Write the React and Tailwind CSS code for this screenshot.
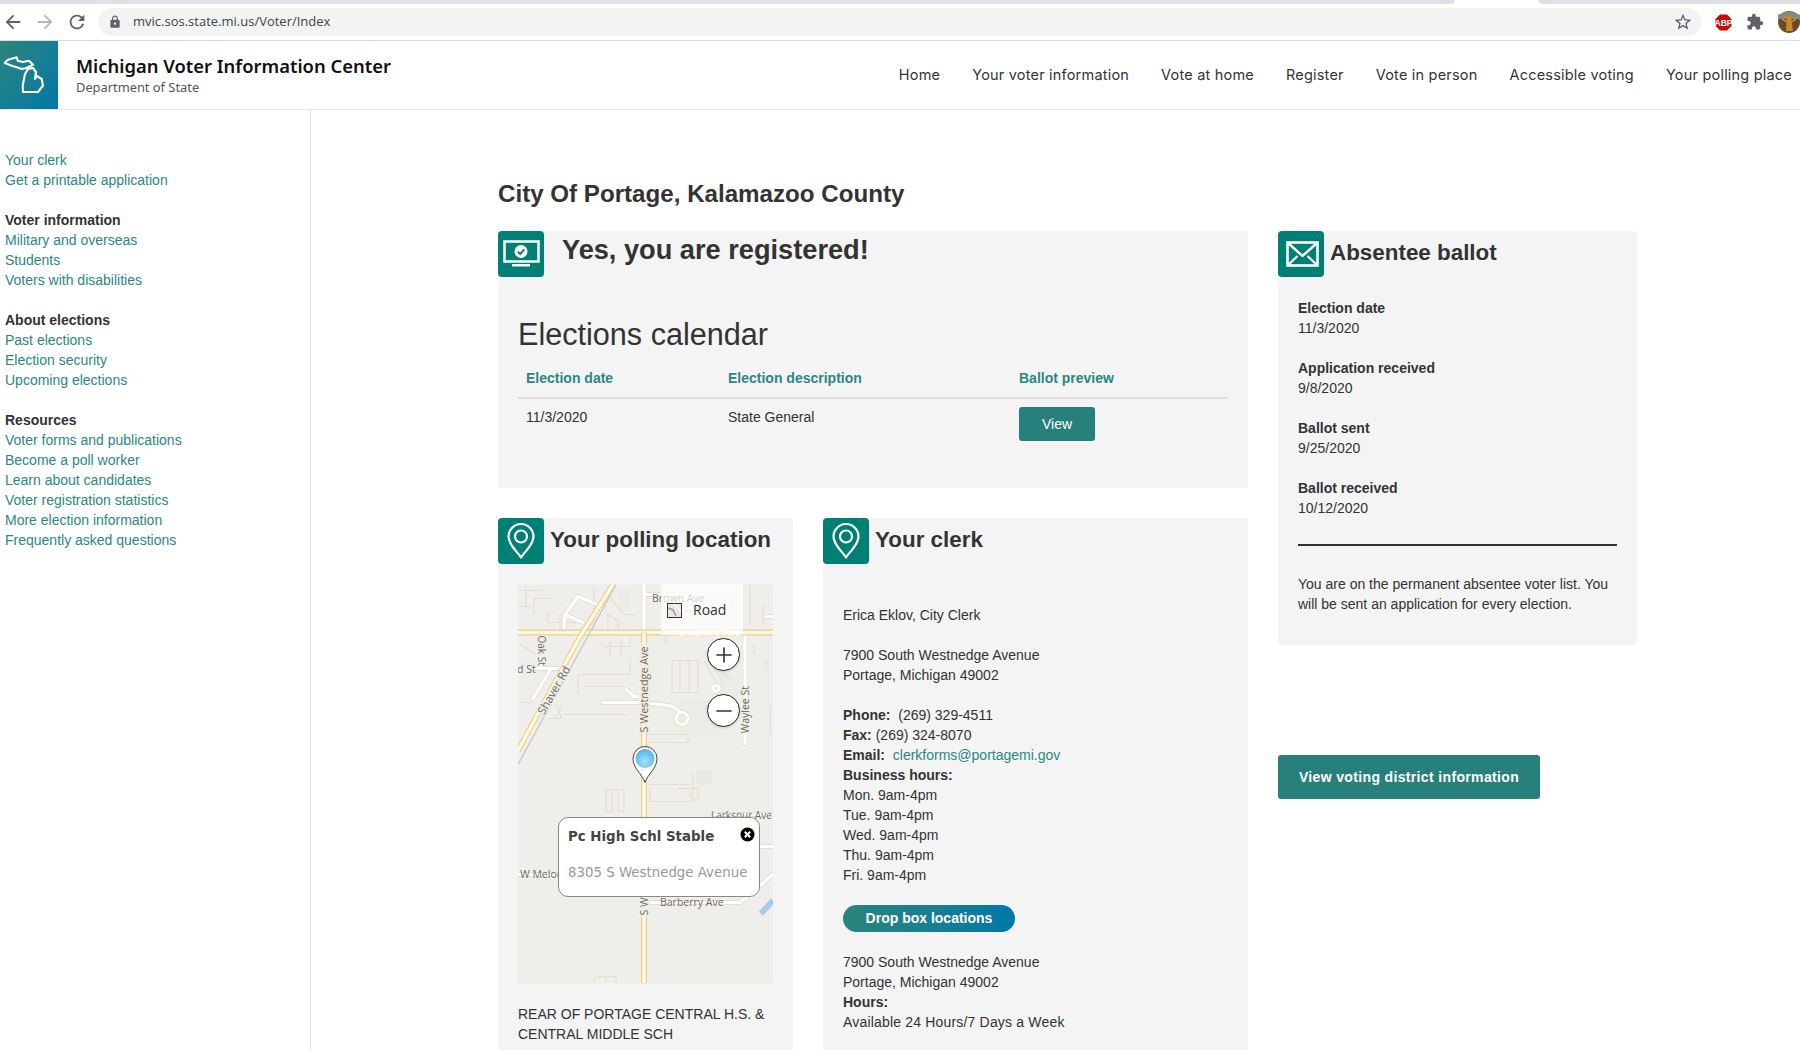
import React from "react";
import { MdArrowBack, MdArrowForward, MdRefresh, MdLock, MdStarBorder, MdExtension } from "react-icons/md";
import { Plus, Minus } from "lucide-react";

const ARIAL = "font-['Liberation_Sans',Arial,sans-serif]";

function Link({ children, className = "" }) {
  return <div className={"text-[#2a8884] " + className}>{children}</div>;
}

function SideGroup({ title, items }) {
  return (
    <div className="mb-5">
      {title && <div className="font-bold text-[#333]">{title}</div>}
      {items.map((t) => (
        <Link key={t}>{t}</Link>
      ))}
    </div>
  );
}

function IconBox({ children }) {
  return (
    <div className="w-[46px] h-[46px] shrink-0 rounded-[4px] bg-[#008075] flex items-center justify-center">
      <svg width="46" height="46" viewBox="0 0 46 46" fill="none">{children}</svg>
    </div>
  );
}

function PinIcon() {
  return (
    <IconBox>
      <path d="M23 39.5 C19 33 10.5 27 10.5 18.5 A12.5 12.5 0 0 1 35.5 18.5 C35.5 27 27 33 23 39.5 Z" stroke="#fff" strokeWidth="2.2" strokeLinejoin="round" />
      <circle cx="23" cy="18.5" r="6" stroke="#fff" strokeWidth="2.2" />
    </IconBox>
  );
}

function MonitorIcon() {
  return (
    <IconBox>
      <rect x="6.5" y="10.5" width="34" height="20" stroke="#fff" strokeWidth="2.5" />
      <rect x="14" y="33" width="18" height="2.5" fill="#fff" />
      <circle cx="23" cy="20.5" r="6.5" fill="#fff" />
      <path d="M19.8 20.6 L22.2 23 L26.3 18.4" stroke="#008075" strokeWidth="1.9" />
    </IconBox>
  );
}

function EnvelopeIcon() {
  return (
    <IconBox>
      <rect x="9.5" y="11.5" width="30" height="23" stroke="#fff" strokeWidth="2.6" />
      <path d="M10 12 L24.5 25 L39 12" stroke="#fff" strokeWidth="2.4" />
      <path d="M10 34 L19.5 25 M39 34 L29.5 25" stroke="#fff" strokeWidth="2.2" />
    </IconBox>
  );
}

function MapDrawing() {
  const beige = "#e4decf";
  const label = { fontFamily: "'Open Sans',sans-serif", fontSize: 10.5, fill: "#6d6a64" };
  const local = (
    <>
      <path d="M126 48 V0 M126 10 H142" />
      <path d="M46 44 L47 30 L60 12 L84 22 L68 44 M47 30 L65 38" />
      <path d="M15 84 H44 M32 86 L15 114 M22 72 V84" />
      <path d="M85 118 H126 L150 121 Q158 122 162 128 M108 105 L116 112 H124" />
      <circle cx="164" cy="134" r="6" />
      <circle cx="198" cy="104" r="3" />
      <path d="M227 48 V159" />
      <path d="M0 290 H70 M128 318 H222 L255 290 M196 230 H255 M220 262 H255 M248 32 H255" />
    </>
  );
  return (
    <svg className="w-full h-full block" viewBox="0 0 255 399">
      <defs>
        <radialGradient id="pinb" cx="50%" cy="65%" r="60%">
          <stop offset="0%" stopColor="#a5e2fb" />
          <stop offset="100%" stopColor="#55b5ea" />
        </radialGradient>
      </defs>
      <rect width="255" height="399" fill="#efeeea" />
      <rect x="160" y="116" width="40" height="37" fill="#ecebe5" />
      <rect x="202" y="90" width="20" height="23" fill="#ecebe5" />
      <rect x="100" y="5" width="12" height="22" fill="#ecebe5" />
      <rect x="178" y="186" width="16" height="14" fill="#e9e7e1" />
      {/* parcels */}
      <g stroke={beige} strokeWidth="1.1" fill="none">
        <path d="M8 0 V25 M0 6 H24 M16 14 H34 M16 14 V30 M0 22 H14 M30 27 V38 H60 M42 30 V44 M76 2 V44 M88 8 L106 30 H118 M90 44 V30 L100 36 V44 M85 62 H112 V44 M103 52 V74 M92 56 V72 M60 90 H112 V74 M60 90 V110 M66 102 H106" />
        <path d="M38 120 L44 134 H30 L44 134 M38 134 L44 120 M46 130 H110 M2 118 H14 M2 60 L18 70" />
        <path d="M154 76 H180 V108 H154 Z M162 76 V108 M171 76 V108 M186 76 L200 102 M192 76 L206 100 M197 76 L212 96 M148 26 V60 M148 26 H175 M160 45 H200 M130 150 H170 V158 H130 M132 203 V217 H175 V188 M88 205 H106 M88 205 V227 H94 V205 M100 205 V227 H106 V205 M130 200 H172 M160 204 H180 V214 H172 V204" />
        <path d="M0 290 V399 M76 399 V395 Q76 392 82 392 H98 V399 M88 392 V399 M214 10 V28 M232 0 V40 M245 20 V40 M236 60 V70 M248 75 V85 M252 120 V150" />
      </g>
      {/* white local roads */}
      <g fill="none" strokeLinecap="round" strokeLinejoin="round">
        <g stroke={beige} strokeWidth="4.8">{local}</g>
        <g stroke="#ffffff" strokeWidth="3.2">{local}</g>
      </g>
      {/* Main roads */}
      <path d="M0 48 H255" stroke="#efcb7c" strokeWidth="6" />
      <path d="M0 48 H255" stroke="#fef9e6" strokeWidth="3.6" />
      <path d="M126 48 V399" stroke="#efcb7c" strokeWidth="6" />
      <path d="M126 48 V399" stroke="#fef9e6" strokeWidth="3.6" />
      <path d="M95 0 L62 52 L0 166" stroke="#efcb7c" strokeWidth="5.4" fill="none" />
      <path d="M95 0 L62 52 L0 166" stroke="#fef9e6" strokeWidth="3.4" fill="none" />
      <path d="M98 0 L0 180" stroke="#c4c2c6" strokeWidth="1.2" fill="none" />
      <path d="M243 329 L255 316" stroke="#a9c9f0" strokeWidth="6" />
      {/* Labels */}
      <text x="134" y="17" style={label}>Brown Ave</text>
      <text x="161" y="51" style={{ ...label, fill: "#ffffff", opacity: 0.8 }}>E Centre Ave</text>
      <text style={{ ...label, fontSize: 10, paintOrder: "stroke", stroke: "#efeeea", strokeWidth: 2 }} transform="translate(20,51) rotate(90)">Oak St</text>
      <text x="-1" y="88" style={label}>d St</text>
      <text style={{ ...label, fontSize: 11.5, paintOrder: "stroke", stroke: "#efeeea", strokeWidth: 2.5 }} transform="translate(26,131) rotate(-60)">Shaver Rd</text>
      <rect x="120" y="58" width="12" height="90" fill="#efeeea" opacity="0.7" />
      <text style={{ ...label, fontSize: 10.8 }} transform="translate(130,148) rotate(-90)">S Westnedge Ave</text>
      <text style={{ ...label, paintOrder: "stroke", stroke: "#efeeea", strokeWidth: 2 }} transform="translate(231,149) rotate(-90)">Waylee St</text>
      <text x="193" y="234" style={{ ...label, fontSize: 10 }}>Larkspur Ave</text>
      <text x="2" y="293" style={label}>W Meloc</text>
      <text x="142" y="321" style={label}>Barberry Ave</text>
      <rect x="120" y="310" width="12" height="22" fill="#efeeea" />
      <text style={label} transform="translate(130,331) rotate(-90)">S W</text>
      {/* Pin */}
      <path d="M127 198 C124 189 115 184 115 174 A12 12 0 0 1 139 174 C139 184 130 189 127 198 Z" fill="#fff" stroke="#444" strokeWidth="1" />
      <circle cx="127" cy="174" r="9.5" fill="url(#pinb)" />
    </svg>
  );
}

function MapBlock() {
  return (
    <div className="relative w-[255px] h-[400px]">
      <MapDrawing />
      <div className="absolute left-[143px] top-0 w-[82px] h-[51px] bg-white/70 flex items-start font-['Open_Sans',sans-serif] text-[14px] text-[#333]">
        <svg className="ml-[6px] mt-[19px] shrink-0" width="15" height="15" viewBox="0 0 15 15">
          <rect x="0.5" y="0.5" width="14" height="14" fill="#ece8dc" stroke="#333" />
          <path d="M1 5 L6 7 L9 13" stroke="#b58bd0" strokeWidth="1.6" fill="none" />
          <path d="M7 1 L14 8" stroke="#fff" strokeWidth="1.2" />
        </svg>
        <span className="ml-[11px] mt-[16px] leading-[20px]">Road</span>
      </div>
      <div className="absolute left-[189px] top-[54px] w-[33px] h-[33px] rounded-full bg-white border-[1.5px] border-[#222] flex items-center justify-center shadow-sm">
        <Plus size={24} strokeWidth={1.6} color="#333" />
      </div>
      <div className="absolute left-[189px] top-[110px] w-[33px] h-[33px] rounded-full bg-white border-[1.5px] border-[#222] flex items-center justify-center shadow-sm">
        <Minus size={24} strokeWidth={1.6} color="#333" />
      </div>
      <div className="absolute left-[40px] top-[233px] w-[202px] h-[80px] bg-white border border-[#888] rounded-[10px] font-['DejaVu_Sans',sans-serif] text-[13.35px]">
        <div className="absolute left-[9px] top-[9px] leading-[20px] font-bold text-[#444] whitespace-nowrap">Pc High Schl Stable</div>
        <div className="absolute left-[9px] top-[45px] leading-[20px] text-[#999] whitespace-nowrap">8305 S Westnedge Avenue</div>
        <svg className="absolute left-[181px] top-[9px]" width="15" height="15" viewBox="0 0 15 15">
          <circle cx="7.5" cy="7.5" r="7" fill="#000" />
          <path d="M4.8 4.8 L10.2 10.2 M10.2 4.8 L4.8 10.2" stroke="#fff" strokeWidth="2" />
        </svg>
      </div>
    </div>
  );
}

function AbsItem({ label, value }) {
  return (
    <div className="mb-5">
      <div className="font-bold">{label}</div>
      <div>{value}</div>
    </div>
  );
}

const NAV = ["Home", "Your voter information", "Vote at home", "Register", "Vote in person", "Accessible voting", "Your polling place"];

export default function App() {
  return (
    <div className={"w-[1800px] h-[1050px] overflow-hidden bg-white flex flex-col " + ARIAL}>
      {/* Browser chrome */}
      <div className="flex h-[4px] shrink-0">
        <div className="w-[1455px] bg-[#dee1e6] rounded-br-[6px]" />
        <div className="w-[84px] bg-white" />
        <div className="flex-1 bg-[#dee1e6] rounded-bl-[6px]" />
      </div>
      <div className="h-[37px] shrink-0 border-b border-[#dadce0] flex items-start pt-[4px] text-[#5f6368]">
        <MdArrowBack className="ml-[2px] mt-[3px]" size={22} />
        <MdArrowForward className="ml-[10px] mt-[3px] text-[#b5b7ba]" size={22} />
        <MdRefresh className="ml-[10px] mt-[3px]" size={22} />
        <div className="ml-[10px] w-[1603px] h-[28px] rounded-full bg-[#f1f3f4] flex items-center pl-[10px] pr-[8px]">
          <MdLock size={14} />
          <span className="ml-[11px] font-['Open_Sans',sans-serif] text-[13px] text-[#444]">mvic.sos.state.mi.us/Voter/Index</span>
          <MdStarBorder className="ml-auto" size={20} />
        </div>
        <svg className="ml-[14px] mt-[6px]" width="17" height="17" viewBox="0 0 17 17">
          <path d="M5 0.5 H12 L16.5 5 V12 L12 16.5 H5 L0.5 12 V5 Z" fill="#c80a0a" />
          <text x="8.5" y="11.5" textAnchor="middle" fontSize="8.5" fontWeight="700" fill="#fff" fontFamily="'Liberation Sans',sans-serif">ABP</text>
        </svg>
        <MdExtension className="ml-[14px] mt-[5px]" size={18} color="#5f6368" />
        <svg className="ml-[14px] mt-[3px]" width="22" height="22" viewBox="0 0 22 22">
          <circle cx="11" cy="11" r="11" fill="#6b4a2a" />
          <path d="M0 8 H22 V4 Q11 -3 0 4 Z" fill="#8a8a78" />
          <path d="M9 5 H13 L15 20 H8 Z" fill="#c9892e" />
          <path d="M4 8 L9 11 M18 8 L13 11" stroke="#c9892e" strokeWidth="1.6" />
        </svg>
      </div>

      {/* Site header */}
      <div className="h-[69px] shrink-0 border-b border-[#e6e6e6] flex">
        <div className="w-[58px] h-[68px] bg-gradient-to-br from-[#2a8578] to-[#0077aa]">
          <svg width="58" height="68" viewBox="0 0 58 68" fill="none" stroke="#fff" strokeWidth="2.1" strokeLinejoin="round">
            <path d="M4.7 22 L8 18.7 L16.7 16.3 L17.7 19.7 L22.7 21 L29 19.7 L33 23.7 L26.7 27 L21.7 28 L16 26 L11.7 24.7 Z" />
            <path d="M25 33 L28 28 L33 27 L36 31 L35 38 L37 35 L41.7 38 L43 44.7 L38 51 L23 51 L22.7 44.7 Z" />
          </svg>
        </div>
        <div className="ml-[18px] pt-[13px]">
          <div className="font-['Noto_Sans',sans-serif] font-semibold text-[18.4px] leading-[24px] text-[#111]">Michigan Voter Information Center</div>
          <div className="mt-[1px] font-['Noto_Sans',sans-serif] text-[12.85px] leading-[16px] text-[#555]">Department of State</div>
        </div>
        <nav className="ml-auto pr-[8px] flex items-center gap-[32px] font-['Inter',sans-serif] text-[14.5px] text-[#333] tracking-[0.2px]">
          {NAV.map((n) => (
            <span key={n}>{n}</span>
          ))}
        </nav>
      </div>

      {/* Body */}
      <div className="flex-1 flex min-h-0 text-[14px] leading-[20px] text-[#333]">
        <aside className="w-[311px] shrink-0 border-r border-[#e6e6e6] pl-[5px] pt-[40px]">
          <SideGroup items={["Your clerk", "Get a printable application"]} />
          <SideGroup title="Voter information" items={["Military and overseas", "Students", "Voters with disabilities"]} />
          <SideGroup title="About elections" items={["Past elections", "Election security", "Upcoming elections"]} />
          <SideGroup title="Resources" items={["Voter forms and publications", "Become a poll worker", "Learn about candidates", "Voter registration statistics", "More election information", "Frequently asked questions"]} />
        </aside>

        <main className="flex-1 pl-[187px] min-w-0">
          <h1 className="mt-[68px] h-[32px] leading-[32px] font-bold text-[24.15px] text-[#333]">City Of Portage, Kalamazoo County</h1>
          <div className="mt-[21px] flex gap-[30px]">
            <div className="w-[750px] shrink-0">
              {/* Registered */}
              <section className="h-[257px] bg-[#f4f4f4]">
                <div className="flex">
                  <MonitorIcon />
                  <h2 className="ml-[18px] mt-[2px] text-[27.2px] leading-[34px] font-bold text-[#333]">Yes, you are registered!</h2>
                </div>
                <div className="px-[20px]">
                  <h3 className="mt-[39px] text-[30.6px] leading-[36px] text-[#333]">Elections calendar</h3>
                  <div className="mt-[16px] grid grid-cols-[202px_291px_1fr] px-[8px] h-[29px] border-b-2 border-[#dedede] mb-[8px] font-bold text-[#2a8884] box-content">
                    <div>Election date</div>
                    <div>Election description</div>
                    <div>Ballot preview</div>
                  </div>
                  <div className="grid grid-cols-[202px_291px_1fr] px-[8px]">
                    <div>11/3/2020</div>
                    <div>State General</div>
                    <div>
                      <div className="w-[76px] h-[34px] rounded-[3px] bg-[#28807c] text-white flex items-center justify-center">View</div>
                    </div>
                  </div>
                </div>
              </section>

              <div className="mt-[30px] flex gap-[30px]">
                {/* Polling */}
                <section className="w-[295px] h-[600px] bg-[#f4f4f4] rounded-[4px]">
                  <div className="flex">
                    <PinIcon />
                    <h2 className="ml-[6px] mt-[8px] text-[22.4px] leading-[28px] font-bold text-[#333] whitespace-nowrap">Your polling location</h2>
                  </div>
                  <div className="mt-[20px] ml-[20px]">
                    <MapBlock />
                  </div>
                  <div className="ml-[20px] mt-[20px] w-[260px]">REAR OF PORTAGE CENTRAL H.S. &amp; CENTRAL MIDDLE SCH</div>
                </section>

                {/* Clerk */}
                <section className="w-[425px] h-[600px] bg-[#f4f4f4]">
                  <div className="flex">
                    <PinIcon />
                    <h2 className="ml-[6px] mt-[8px] text-[22.4px] leading-[28px] font-bold text-[#333]">Your clerk</h2>
                  </div>
                  <div className="pl-[20px] pt-[41px]">
                    <div className="mb-5">Erica Eklov, City Clerk</div>
                    <div className="mb-5">
                      <div>7900 South Westnedge Avenue</div>
                      <div>Portage, Michigan 49002</div>
                    </div>
                    <div><b>Phone:</b>&nbsp; (269) 329-4511</div>
                    <div><b>Fax:</b> (269) 324-8070</div>
                    <div><b>Email:</b>&nbsp; <span className="text-[#2a8884]">clerkforms@portagemi.gov</span></div>
                    <div className="font-bold">Business hours:</div>
                    <div>Mon. 9am-4pm</div>
                    <div>Tue. 9am-4pm</div>
                    <div>Wed. 9am-4pm</div>
                    <div>Thu. 9am-4pm</div>
                    <div>Fri. 9am-4pm</div>
                    <div className="mt-[20px] w-[172px] h-[27px] pb-[2px] rounded-full bg-gradient-to-r from-[#2a8578] to-[#0077aa] text-white font-bold flex items-center justify-center">Drop box locations</div>
                    <div className="mt-[20px]">7900 South Westnedge Avenue</div>
                    <div>Portage, Michigan 49002</div>
                    <div className="font-bold">Hours:</div>
                    <div className="tracking-[0.18px]">Available 24 Hours/7 Days a Week</div>
                  </div>
                </section>
              </div>
            </div>

            {/* Right column */}
            <div className="w-[359px] shrink-0">
              <section className="h-[414px] bg-[#f4f4f4] rounded-[4px]">
                <div className="flex">
                  <EnvelopeIcon />
                  <h2 className="ml-[6px] mt-[8px] text-[22.4px] leading-[28px] font-bold text-[#333]">Absentee ballot</h2>
                </div>
                <div className="px-[20px] pt-[21px]">
                  <AbsItem label="Election date" value="11/3/2020" />
                  <AbsItem label="Application received" value="9/8/2020" />
                  <AbsItem label="Ballot sent" value="9/25/2020" />
                  <AbsItem label="Ballot received" value="10/12/2020" />
                  <div className="mt-[26px] border-t-2 border-[#333]" />
                  <p className="mt-[28px]">You are on the permanent absentee voter list. You will be sent an application for every election.</p>
                </div>
              </section>
              <div className="mt-[110px] w-[262px] h-[44px] rounded-[3px] bg-[#28807c] text-white font-bold tracking-[0.35px] flex items-center justify-center">View voting district information</div>
            </div>
          </div>
        </main>
      </div>
    </div>
  );
}
